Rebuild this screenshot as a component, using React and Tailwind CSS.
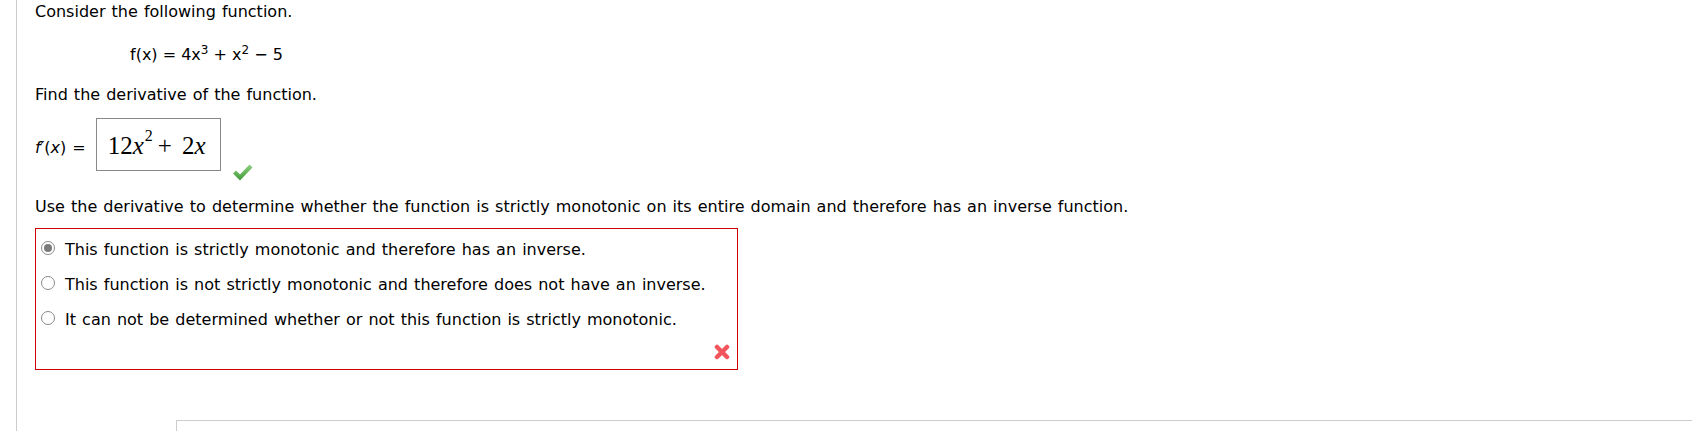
import React, { useState } from 'react';

const options = [
    'This function is strictly monotonic and therefore has an inverse.',
    'This function is not strictly monotonic and therefore does not have an inverse.',
    'It can not be determined whether or not this function is strictly monotonic.',
];

function CheckIcon() {
    return (
        <svg width="20" height="17" viewBox="0 0 20 17">
            <defs>
                <linearGradient id="chk" x1="0" y1="0" x2="0" y2="1">
                    <stop offset="0" stopColor="#8fd07d" />
                    <stop offset="1" stopColor="#3f9a3a" />
                </linearGradient>
            </defs>
            <polygon points="0,9.5 3,6.5 7,10.5 16.5,0.5 19.5,3.5 7,16.5" fill="url(#chk)" />
        </svg>
    );
}

function CrossIcon() {
    return (
        <svg width="16" height="16" viewBox="0 0 16 16">
            <path d="M3 3 L13 13 M13 3 L3 13" stroke="#f2555c" strokeWidth="4.5" strokeLinecap="round" />
        </svg>
    );
}

function Radio({ checked }) {
    return (
        <span className="mt-[1px] mr-[10px] flex h-[14px] w-[14px] shrink-0 items-center justify-center rounded-full border border-[#8a8a8a] bg-white">
            {checked && <span className="h-[8px] w-[8px] rounded-full bg-[#7a7a7a]" />}
        </span>
    );
}

export default function App() {
    const [selected] = useState(0);

    return (
        <div className="h-[431px] overflow-hidden bg-white font-['DejaVu_Sans',Verdana,sans-serif] text-[16px] leading-[20px] text-black [word-spacing:1px]">
            <div className="ml-4 h-full border-l border-[#cccccc] pl-[18px] pt-[2px]">
                <p>Consider the following function.</p>

                <p className="ml-[95px] mt-[23px] [word-spacing:0]">
                    f(x) = 4x<sup>3</sup> + x<sup>2</sup> − 5
                </p>

                <p className="mt-[20px]">Find the derivative of the function.</p>

                {/* answer box */}
                <div className="mt-[13px] flex items-start">
                    <span className="mt-[20px] mr-[10px]">
                        <i>f′</i>(<i>x</i>) =
                    </span>
                    <div className="box-border h-[53px] w-[125px] border border-[#888888] pl-[11px] pt-[12px] font-['Liberation_Serif',serif] text-[25px] leading-[30px] [word-spacing:0]">
                        12<i>x</i>
                        <sup className="top-[-13px] ml-[1px] text-[16px]">2</sup>
                        <span className="ml-[5px] mr-[10px]">+</span>
                        2<i>x</i>
                    </div>
                    <span className="ml-[12px] mt-[46px]">
                        <CheckIcon />
                    </span>
                </div>

                <p className="mt-[16px]">
                    Use the derivative to determine whether the function is strictly monotonic on its entire domain and therefore has an inverse function.
                </p>

                {/* multiple choice */}
                <div className="mt-[11px] box-border flex h-[142px] w-[703px] flex-col border border-[#cc0000] pl-[5px] pt-[11px]">
                    <div className="flex flex-col gap-[15px]">
                        {options.map((opt, i) => (
                            <label key={i} className="flex items-start">
                                <Radio checked={selected === i} />
                                <span>{opt}</span>
                            </label>
                        ))}
                    </div>
                    <div className="mt-[14px] flex justify-end pr-[7px]">
                        <CrossIcon />
                    </div>
                </div>

                <div className="ml-[141px] mt-[50px] h-[20px] border-l border-t border-[#cccccc]" />
            </div>
        </div>
    );
}
